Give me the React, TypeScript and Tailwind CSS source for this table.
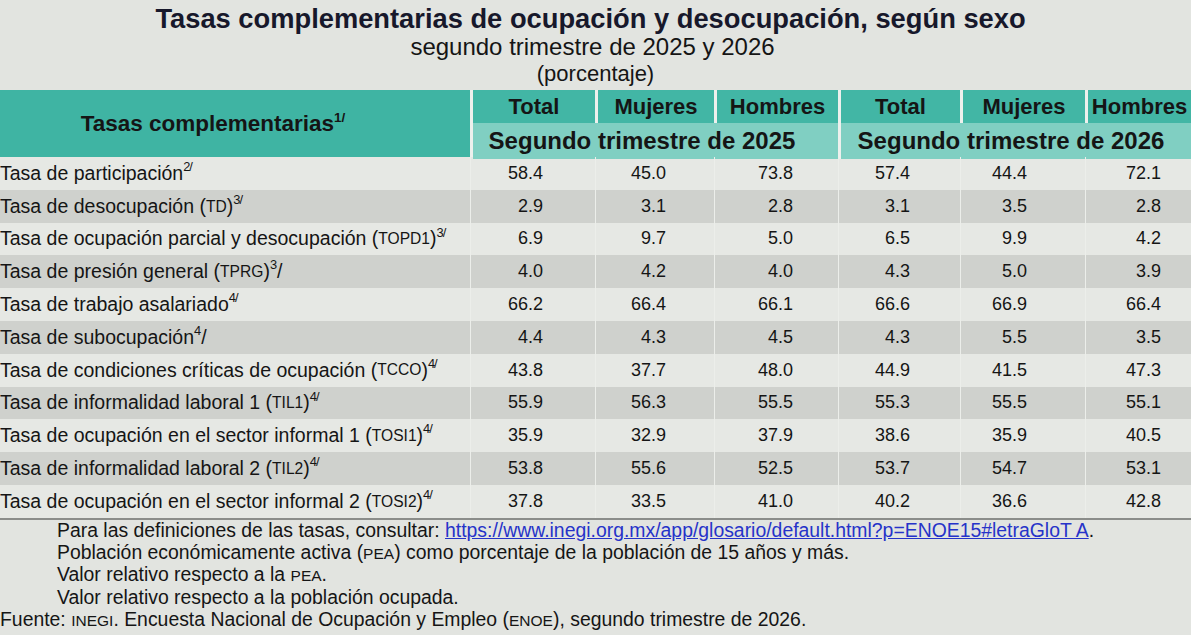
import type { ReactNode } from 'react'

type Row = {
  label: ReactNode
  values: string[]
}

// small-caps style abbreviation, like the INEGI print
const Ab = ({ children }: { children: ReactNode }) => <span className="text-[0.8em]">{children}</span>

const Note = ({ n, slashUp = true }: { n: string; slashUp?: boolean }) =>
  slashUp ? (
    <sup className="text-[0.66em] top-[-0.5em] tracking-[-1px]">{n}/</sup>
  ) : (
    <>
      <sup className="text-[0.66em] top-[-0.5em]">{n}</sup>/
    </>
  )

const rows: Row[] = [
  { label: <>Tasa de participación<Note n="2" /></>, values: ['58.4', '45.0', '73.8', '57.4', '44.4', '72.1'] },
  { label: <>Tasa de desocupación (<Ab>TD</Ab>)<Note n="3" /></>, values: ['2.9', '3.1', '2.8', '3.1', '3.5', '2.8'] },
  { label: <>Tasa de ocupación parcial y desocupación (<Ab>TOPD1</Ab>)<Note n="3" /></>, values: ['6.9', '9.7', '5.0', '6.5', '9.9', '4.2'] },
  { label: <>Tasa de presión general (<Ab>TPRG</Ab>)<Note n="3" slashUp={false} /></>, values: ['4.0', '4.2', '4.0', '4.3', '5.0', '3.9'] },
  { label: <>Tasa de trabajo asalariado<Note n="4" /></>, values: ['66.2', '66.4', '66.1', '66.6', '66.9', '66.4'] },
  { label: <>Tasa de subocupación<Note n="4" slashUp={false} /></>, values: ['4.4', '4.3', '4.5', '4.3', '5.5', '3.5'] },
  { label: <>Tasa de condiciones críticas de ocupación (<Ab>TCCO</Ab>)<Note n="4" /></>, values: ['43.8', '37.7', '48.0', '44.9', '41.5', '47.3'] },
  { label: <>Tasa de informalidad laboral 1 (<Ab>TIL1</Ab>)<Note n="4" /></>, values: ['55.9', '56.3', '55.5', '55.3', '55.5', '55.1'] },
  { label: <>Tasa de ocupación en el sector informal 1 (<Ab>TOSI1</Ab>)<Note n="4" /></>, values: ['35.9', '32.9', '37.9', '38.6', '35.9', '40.5'] },
  { label: <>Tasa de informalidad laboral 2 (<Ab>TIL2</Ab>)<Note n="4" /></>, values: ['53.8', '55.6', '52.5', '53.7', '54.7', '53.1'] },
  { label: <>Tasa de ocupación en el sector informal 2 (<Ab>TOSI2</Ab>)<Note n="4" /></>, values: ['37.8', '33.5', '41.0', '40.2', '36.6', '42.8'] },
]

const cols = 'grid grid-cols-[470px_125px_119px_124px_122px_125px_1fr]'
// right padding per value column so the figures line up like the print
const valuePad = ['pr-[52px]', 'pr-[48px]', 'pr-[45px]', 'pr-[50px]', 'pr-[58px]', 'pr-[30px]']

export default function App() {
  return (
    <div className="w-[1191px] h-[635px] overflow-hidden bg-[#e2e4e0] text-[#151515] font-['Liberation_Sans',Arial,sans-serif]">
      {/* Title block */}
      <div className="pt-[3px] text-center">
        <h1 className="text-[27.3px] leading-[31px] font-bold text-[#17182b] pr-[10px]">
          Tasas complementarias de ocupación y desocupación, según sexo
        </h1>
        <p className="text-[24px] leading-[26px] pr-[6px]">segundo trimestre de 2025 y 2026</p>
        <p className="text-[22px] leading-[27px]">(porcentaje)</p>
      </div>

      {/* Header */}
      <div className="flex h-[67px] mt-[3px]">
        <div className="w-[470px] shrink-0 bg-[#3fb4a3] flex items-center justify-center text-[22.5px] font-bold pt-[1px] pr-[44px]">
          <span>
            Tasas complementarias<sup className="text-[0.6em] top-[-0.65em]">1/</sup>
          </span>
        </div>
        <div className="flex-1 flex flex-col border-l-[3px] border-[#eef0ed]">
          <div className="grid grid-cols-[122px_119px_124px_122px_125px_1fr] h-[33px] text-[22px] font-bold">
            {['Total', 'Mujeres', 'Hombres', 'Total', 'Mujeres', 'Hombres'].map((h, i) => (
              <div
                key={i}
                className={`bg-[#42b6a5] flex items-center justify-center ${i > 0 ? 'border-l-[3px] border-[#eef0ed]' : ''}`}
              >
                {h}
              </div>
            ))}
          </div>
          <div className="h-[3px] bg-[#eef0ed]" />
          <div className="grid grid-cols-[365px_1fr] flex-1 text-[24px] font-bold">
            <div className="bg-[#80cfc2] flex items-center justify-center pr-[27px]">Segundo trimestre de 2025</div>
            <div className="bg-[#80cfc2] flex items-center justify-center border-l-[3px] border-[#eef0ed] pr-[10px]">
              Segundo trimestre de 2026
            </div>
          </div>
        </div>
      </div>

      {/* Body */}
      <div className="border-b-2 border-[#8b8d8a]">
        {rows.map((r, i) => (
          <div
            key={i}
            className={`${cols} h-[32.8px] text-[18px] ${i % 2 === 0 ? 'bg-[#e6e8e4]' : 'bg-[#cfd1cd]'}`}
          >
            <div className="flex items-center whitespace-nowrap text-[19.5px]">{r.label}</div>
            {r.values.map((v, j) => (
              <div
                key={j}
                className={`flex items-center justify-end border-l border-[#eceeea] ${valuePad[j]}`}
              >
                {v}
              </div>
            ))}
          </div>
        ))}
      </div>

      {/* Notes */}
      <div className="text-[19.4px] leading-[21.8px]">
        <p className="pl-[57px]">
          Para las definiciones de las tasas, consultar:{' '}
          <a href="#" className="text-[#2633c9] underline">
            https://www.inegi.org.mx/app/glosario/default.html?p=ENOE15#letraGloT A
          </a>
          .
        </p>
        <p className="pl-[57px]">
          Población económicamente activa (<Ab>PEA</Ab>) como porcentaje de la población de 15 años y más.
        </p>
        <p className="pl-[57px]">
          Valor relativo respecto a la <Ab>PEA</Ab>.
        </p>
        <p className="pl-[57px]">Valor relativo respecto a la población ocupada.</p>
        <p>
          Fuente: <Ab>INEGI</Ab>. Encuesta Nacional de Ocupación y Empleo (<Ab>ENOE</Ab>), segundo trimestre de 2026.
        </p>
      </div>
    </div>
  )
}
